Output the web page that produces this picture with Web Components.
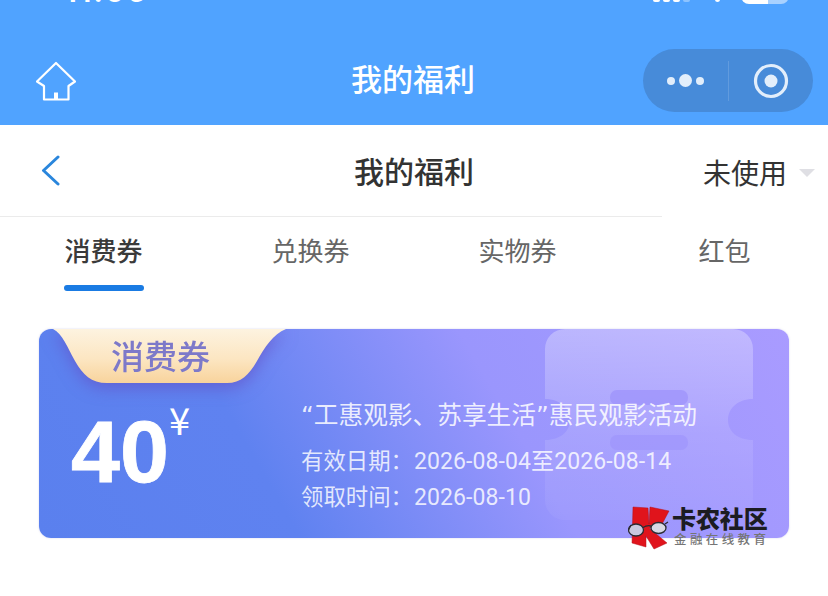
<!DOCTYPE html>
<html lang="zh"><head><meta charset="utf-8"><title>我的福利</title>
<style>
html,body{margin:0;padding:0;background:#fff;height:100%;overflow:hidden}
body{font-family:"Noto Sans CJK SC","Liberation Sans",sans-serif;width:828px;height:596px}
</style></head><body>
<wf-appbar title-text="我的福利"></wf-appbar>
<wf-subhead>我的福利<span slot="filter">未使用</span></wf-subhead>
<wf-tabs>
  <wf-tab active>消费券</wf-tab><wf-tab>兑换券</wf-tab><wf-tab>实物券</wf-tab><wf-tab>红包</wf-tab>
</wf-tabs>
<wf-coupon amount="40" tag="消费券">
  <span slot="title">“工惠观影、苏享生活”惠民观影活动</span>
  <span slot="l1">有效日期：</span><span slot="v1">2026-08-04至2026-08-14</span>
  <span slot="l2">领取时间：</span><span slot="v2">2026-08-10</span>
</wf-coupon>
<script>
function def(name, html, setup){
  customElements.define(name, class extends HTMLElement{
    connectedCallback(){
      if(this.shadowRoot) return;
      const r=this.attachShadow({mode:'open'});
      r.innerHTML=html;
      if(setup) setup(this,r);
    }
  });
}
def('wf-status',`<style>
:host{display:flex;height:5px;overflow:hidden;align-items:flex-end;color:#fff}
.t{margin-left:64px;margin-bottom:2px;font:600 31px/24px "Inter","Liberation Sans",sans-serif;letter-spacing:1.5px;width:589px;flex:none}
.sig{display:flex;gap:3px;align-items:flex-end;width:62px;flex:none;margin-bottom:3px}
.sig i{display:block;width:7px;height:10px;background:#fff;border-radius:2px}
.sig i:last-child{background:rgba(255,255,255,.35)}
.w{width:26px;flex:none;display:flex;justify-content:flex-start;margin-bottom:3px}
.w i{display:block;width:5px;height:3px;background:#fff;border-radius:0 0 3px 3px}
.b{width:48px;height:20px;border-radius:0 0 8px 8px;flex:none;margin-bottom:1px;background:linear-gradient(90deg,#fff 56%,rgba(255,255,255,.5) 56%)}
</style><div class="t">11:06</div><div class="sig"><i></i><i></i><i></i><i></i></div><div class="w"><i></i></div><div class="b"></div>`);
def('wf-appbar',`<style>
:host{display:block;height:125px;background:#50a3ff;color:#fff}
.nav{display:grid;grid-template-columns:1fr auto 1fr;align-items:center;height:63px;margin-top:44px}
.home{margin-left:36px;width:40px;height:40px;display:block}
h1{margin:0 2px 0 0;padding-bottom:6px;font:500 31px/40px "Noto Sans CJK SC",sans-serif}
.cap{justify-self:end;margin-right:15px;width:170px;height:63px;border-radius:32px;background:#478bd9;display:flex;align-items:center;box-sizing:border-box}
.dots{width:85px;display:flex;align-items:center;justify-content:center;gap:4px}
.dots i{display:block;background:#e2eefb;border-radius:50%;width:8px;height:8px}
.dots i:nth-child(2){width:13px;height:13px}
.sep{width:1px;height:40px;background:rgba(255,255,255,.14)}
.rec{flex:1;display:flex;justify-content:center}
.rec svg{display:block}
</style>
<wf-status></wf-status>
<div class="nav">
 <svg class="home" viewBox="0 0 40 40" fill="none" stroke="#fff" stroke-width="2.2" stroke-linejoin="round" stroke-linecap="round">
  <path d="M20 2 L39 20.5 L32.5 25 V38.5 H8 V25 L1 20.5 Z"/>
  <rect x="18" y="31.5" width="4" height="7" fill="#fff" stroke="none"/>
 </svg>
 <h1></h1>
 <div class="cap"><div class="dots"><i></i><i></i><i></i></div><div class="sep"></div>
  <div class="rec"><svg width="36" height="36" viewBox="0 0 36 36"><circle cx="18" cy="18" r="15.5" fill="none" stroke="#e2eefb" stroke-width="3.2"/><circle cx="18" cy="18" r="6.5" fill="#e2eefb"/></svg></div></div>
</div>`,(h,r)=>{r.querySelector('h1').textContent=h.getAttribute('title-text')});
def('wf-subhead',`<style>
:host{display:block;position:relative;height:92px;background:#fff}
.bar{height:91px;width:662px;border-bottom:1px solid #ebebeb;display:grid;grid-template-columns:1fr;align-items:center;position:relative}
.bk{position:absolute;left:41px;top:30px}
.ti{font:500 30px/40px "Noto Sans CJK SC",sans-serif;color:#333;text-align:center;margin-left:164px;width:500px;margin-top:-2px}
.f{position:absolute;left:703px;top:27px;display:flex;align-items:center;font:400 28px/40px "Noto Sans CJK SC",sans-serif;color:#333;white-space:nowrap}
.tri{width:0;height:0;border-left:8px solid transparent;border-right:8px solid transparent;border-top:8px solid #dfdfe4;margin-left:12px;margin-top:2px}
</style>
<div class="bar"><svg class="bk" width="20" height="32" viewBox="0 0 20 32" fill="none" stroke="#2a86dc" stroke-width="3" stroke-linecap="round" stroke-linejoin="round"><path d="M17 2 L2.5 15.5 L17 29"/></svg>
<div class="ti"><slot></slot></div></div>
<div class="f"><slot name="filter"></slot><span class="tri"></span></div>`);
def('wf-tabs',`<style>:host{display:grid;grid-template-columns:repeat(4,207px);height:75px;background:#fff}</style><slot></slot>`);
def('wf-tab',`<style>
:host{display:flex;flex-direction:column;align-items:center;position:relative;font:400 26px/36px "Noto Sans CJK SC",sans-serif;color:#666;padding-top:15px;box-sizing:border-box}
:host([active]){color:#3a3a3a;font-weight:500}
.u{display:none;position:absolute;left:64px;top:68px;width:80px;height:6px;border-radius:3px;background:#1a7be3}
:host([active]) .u{display:block}
</style><slot></slot><span class="u"></span>`);
def('wf-logo',`<style>
:host{display:flex;align-items:flex-start;gap:0}
svg{display:block;flex:none}
.tx{display:flex;flex-direction:column;margin-left:-1px}
.a{font:900 24px/25px "Noto Sans CJK SC",sans-serif;color:#1c1c22;letter-spacing:-.1px;white-space:nowrap}
.b{font:500 12.5px/15px "Noto Sans CJK SC",sans-serif;color:#757575;letter-spacing:3.4px;white-space:nowrap;margin:1px 0 0 2px}
</style>
<svg width="45" height="45" viewBox="0 0 45 45">
 <path d="M5 2 L20 3 L21 19 L22 2 L41 6 L33 21 L21 23 L39 38 L26 44 L18 31 L18 42 L4 38 Z" fill="#e0141c" stroke="#b5101a" stroke-width=".5"/>
 <ellipse cx="8" cy="25" rx="7.5" ry="6" fill="#c9c8df" stroke="#2b2b33" stroke-width="1.3"/>
 <ellipse cx="30.5" cy="23" rx="7.5" ry="5.5" fill="#d8d8e4" stroke="#2b2b33" stroke-width="1.3"/>
 <path d="M15 22.5 Q19 20 23 21 M3 20 L0.5 25 M37 19 L40 17" fill="none" stroke="#2b2b33" stroke-width="1.3"/>
</svg>
<div class="tx"><span class="a">卡农社区</span><span class="b">金融在线教育</span></div>`);
def('wf-coupon',`<style>
:host{display:block;margin:37px 39px 0;position:relative;height:209px}
.card{height:209px;border-radius:12px;position:relative;overflow:hidden;background:linear-gradient(60deg,#5a80ee 0%,#5f82f0 30%,#9a96fd 62%,#a99bff 100%);box-shadow:0 0 2px rgba(120,120,200,.35);display:grid;grid-template-columns:262px 1fr;color:#fff}
.ghost{position:absolute;left:506px;top:0}
.left{position:relative;display:flex;flex-direction:column}
.tag{position:relative;height:54px;width:250px;margin-left:12px;filter:drop-shadow(0 5px 8px rgba(100,70,190,.55))}
.tag svg{position:absolute;left:0;top:0;display:block}
.tag span{position:relative;display:block;text-align:center;width:219px;font:500 33px/52px "Noto Sans CJK SC",sans-serif;color:#7d79c9}
.amt{display:flex;align-items:flex-start;margin:23px 0 0 32px}
.n{font:700 88px/92px "Liberation Sans",sans-serif;color:#fff;-webkit-text-stroke:.8px #fff}
.y{font:400 38px/38px "Noto Sans CJK SC",sans-serif;margin-left:0;margin-top:-6px}
.right{position:relative;padding:69px 0 0 0;font:400 23px/36px "Noto Sans CJK SC",sans-serif;color:rgba(255,255,255,.82);white-space:nowrap}
.title{font:400 24.7px/36px "DejaVu Sans","Noto Sans CJK SC",sans-serif;color:rgba(255,255,255,.85);margin-bottom:7px}
.row{display:flex;align-items:baseline;height:36px;font-size:22.4px}
.row .v{margin-left:1px;font:400 23px/36px Roboto,"Noto Sans CJK SC",sans-serif;letter-spacing:.1px}
wf-logo{position:absolute;left:589px;top:176px;z-index:2}
</style>
<div class="card">
 <svg class="ghost" width="208" height="191" viewBox="0 0 208 191">
  <defs><linearGradient id="g" x1="0" y1="0" x2="0" y2="1"><stop offset="0" stop-color="#fff" stop-opacity=".3"/><stop offset=".55" stop-color="#fff" stop-opacity=".11"/><stop offset="1" stop-color="#fff" stop-opacity=".04"/></linearGradient></defs>
  <path fill="url(#g)" d="M20 0H188a20 20 0 0 1 20 20V70C192 70 183 80 183 91C183 102 192 111 208 111V171a20 20 0 0 1-20 20H20a20 20 0 0 1-20-20V111C16 111 25 102 25 91C25 80 16 70 0 70V20a20 20 0 0 1 20-20Z"/>
  <rect x="65" y="61" width="78" height="15" rx="7" fill="#9d93fb" fill-opacity=".75"/>
  <rect x="65" y="106" width="78" height="15" rx="7" fill="#9d93fb" fill-opacity=".6"/>
 </svg>
 <div class="left">
  <div class="tag"><svg width="238" height="54" viewBox="0 0 238 54"><defs><linearGradient id="t" x1="0" y1="0" x2="0" y2="1"><stop offset="0" stop-color="#fdf3e0"/><stop offset=".55" stop-color="#fce6c2"/><stop offset="1" stop-color="#f8d39c"/></linearGradient></defs>
   <path fill="url(#t)" d="M2 0H235C222 5 214 18 206 32C198 46 190 54 176 54H56C40 54 32 46 24 32C16 18 12 5 2 0Z"/></svg>
   <span class="tl"></span></div>
  <div class="amt"><span class="n"></span><span class="y">¥</span></div>
 </div>
 <div class="right">
  <div class="title"><slot name="title"></slot></div>
  <div class="row"><slot name="l1"></slot><span class="v"><slot name="v1"></slot></span></div>
  <div class="row"><slot name="l2"></slot><span class="v"><slot name="v2"></slot></span></div>
 </div>
</div>
<wf-logo></wf-logo>`,(h,r)=>{r.querySelector('.tl').textContent=h.getAttribute('tag');r.querySelector('.n').textContent=h.getAttribute('amount')});
</script>
</body></html>
